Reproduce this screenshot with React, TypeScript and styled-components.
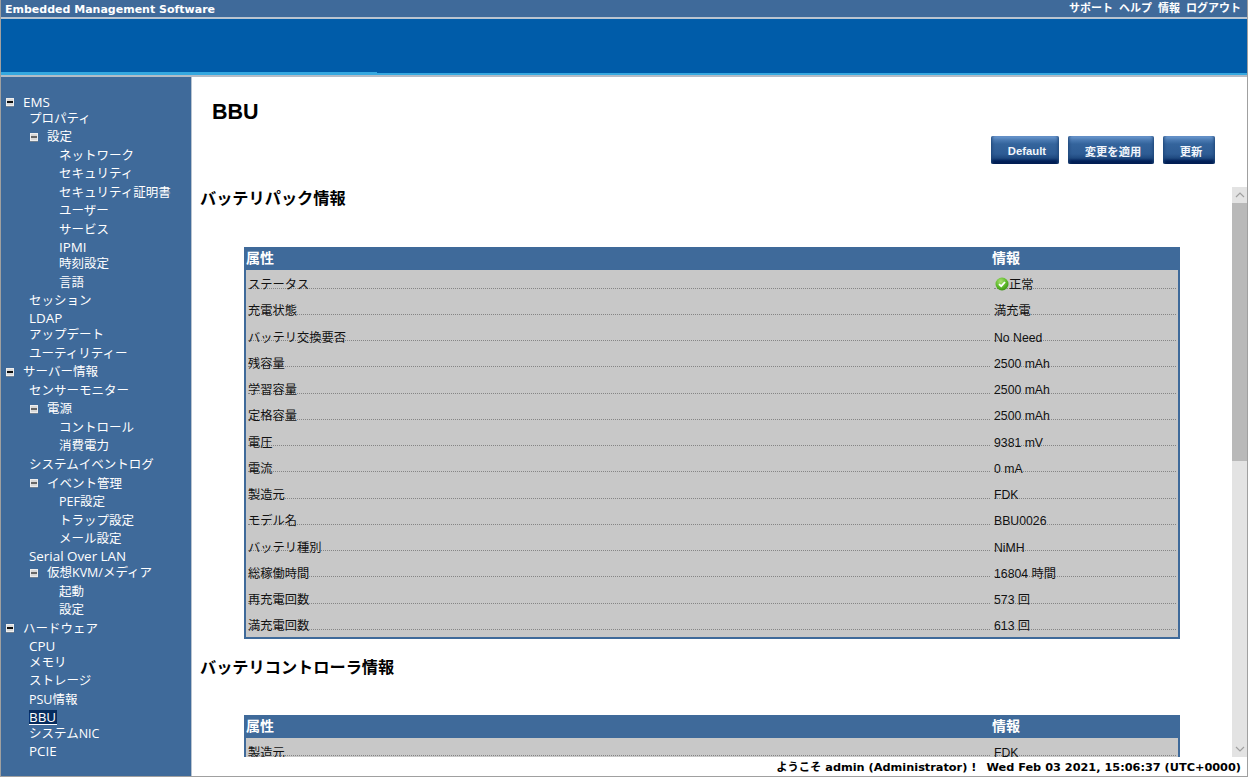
import React from 'react';
import styled, { createGlobalStyle } from 'styled-components';

const CJK = `"Noto Sans CJK JP", sans-serif`;

const Global = createGlobalStyle`
  html, body { margin: 0; padding: 0; background: #fff; overflow: hidden; }
  #root { width: 1248px; height: 782px; }
  * { box-sizing: border-box; }
`;

const Page = styled.div`
  width: 1248px;
  height: 777px;
  display: flex;
  flex-direction: column;
  border-left: 1px solid #a0a0a0;
  border-right: 1px solid #a0a0a0;
  border-bottom: 1px solid #a0a0a0;
  background: #fff;
  font-family: "Liberation Sans", ${CJK};
  overflow: hidden;
`;

const TopBar = styled.div`
  height: 19px;
  flex: none;
  background: #3f6a9a;
  border-bottom: 2px solid #b9c4d0;
  color: #fff;
  display: flex;
  justify-content: space-between;
  padding: 2px 6px 0 4px;
`;

const Brand = styled.div`
  font: bold 11px/15px "DejaVu Sans", ${CJK};
`;

const TopLinks = styled.div`
  display: flex;
  gap: 6px;
  margin-top: -1px;
  font: bold 11px/15px "DejaVu Sans", ${CJK};
`;

const Banner = styled.div`
  height: 56px;
  flex: none;
  background: #005ca9;
  display: flex;
  flex-direction: column;
  justify-content: flex-end;
`;

const Stripe = styled.div`
  height: 3px;
  display: flex;
  align-items: flex-end;
`;

const StripeStrong = styled.div`
  width: 376px;
  height: 3px;
  background: #35a8e0;
`;

const StripeWeak = styled.div`
  flex: 1;
  height: 2px;
  background: #35a8e0;
`;

const Rule = styled.div`
  height: 2px;
  flex: none;
  background: #b4bcc6;
`;

const Body = styled.div`
  flex: 1;
  min-height: 0;
  display: flex;
`;

const Sidebar = styled.nav`
  width: 191px;
  flex: none;
  background: #3f6a9a;
  border-right: 1px solid #b9c4d0;
  color: #fff;
  padding-top: 17.4px;
  font: 13px "DejaVu Sans", ${CJK};
`;

const TreeRow = styled.div<{ $level: number; $latin?: boolean; $fold?: boolean }>`
  height: ${p => (p.$latin ? 15.5 : 18.55)}px;
  display: flex;
  align-items: center;
  white-space: nowrap;
  padding-left: ${p =>
    p.$fold ? (p.$level === 0 ? 5 : 29) : p.$level === 1 ? 28 : 58}px;
  padding-bottom: ${p => (p.$latin ? 0 : 2)}px;
`;

const Fold = styled.span<{ $root?: boolean }>`
  width: 8px;
  height: 8px;
  flex: none;
  margin-right: 9px;
  background: #d8d8d8;
  border: 1px solid #eee;
  display: flex;
  align-items: center;
  justify-content: center;
  box-shadow: 0 1px 0 #6f7f90;
  &::after {
    content: '';
    width: 6px;
    height: 2px;
    background: ${p => (p.$root ? '#111' : '#666')};
  }
`;

const Label = styled.span<{ $active?: boolean; $latin?: boolean }>`
  font-family: "Open Sans", ${CJK};
  font-size: ${p => (p.$latin ? 13.4 : 12.5)}px;
  line-height: 15px;
  ${p =>
    p.$active &&
    `background: #062c5e; border-bottom: 1px solid #fff; line-height: 14px; padding: 0 1px 0 0;`}
`;

const Main = styled.main`
  flex: 1;
  min-width: 0;
  display: flex;
  flex-direction: column;
`;

const Head = styled.div`
  height: 110px;
  flex: none;
  display: flex;
  flex-direction: column;
`;

const PageTitle = styled.h1`
  margin: 0;
  padding: 22px 0 0 20px;
  font: bold 21.5px/26px "Liberation Sans", ${CJK};
  color: #000;
`;

const Actions = styled.div`
  margin-top: 11px;
  display: flex;
  justify-content: flex-end;
  gap: 9px;
  padding-right: 32px;
`;

const ActionButton = styled.button<{ $w: number }>`
  width: ${p => p.$w}px;
  height: 28px;
  border: 0;
  padding: 2px 0 0 4px;
  border-radius: 2px;
  color: #f2f6fb;
  font: bold 11.3px "Liberation Sans", ${CJK};
  background: linear-gradient(#6e9bd2 0, #4b7ab2 4px, #34649c 8px, #2e5c94 18px, #1f4a80 22px, #02215a 25px, #011c50 28px);
  box-shadow: inset 3px 0 3px -2px #1e4677, inset -3px 0 3px -2px #1e4677;
`;

const ScrollFrame = styled.div`
  flex: 1;
  min-height: 0;
  display: flex;
`;

const ScrollPane = styled.div`
  flex: 1;
  min-width: 0;
  overflow: hidden;
  padding-left: 8px;
`;

const SectionTitle = styled.h2<{ $gap: number }>`
  margin: 0;
  height: 24px;
  margin-top: ${p => p.$gap}px;
  font: bold 16.2px/22px "Liberation Sans", ${CJK};
  color: #000;
`;

const InfoTable = styled.div<{ $top: number }>`
  width: 936px;
  margin: ${p => p.$top}px 0 0 44px;
  border: solid #3f6a9a;
  border-width: 0 2px 2px 2px;
  background: #c8c8c8;
`;

const HeaderRow = styled.div`
  display: grid;
  grid-template-columns: 746px 1fr;
  height: 23px;
  margin: 0 -2px 1px;
  background: #3f6a9a;
  color: #fff;
  font: bold 14px/23px "Liberation Sans", ${CJK};
  padding-left: 2px;
`;

const DataRow = styled.div`
  display: grid;
  grid-template-columns: 742px 182px;
  column-gap: 4px;
  padding: 0 2px;
  height: 26.25px;
  &:last-child {
    height: 24.5px;
  }
`;

const Cell = styled.div`
  height: 17.5px;
  border-bottom: 1px dotted #858585;
  font: 12.25px/29px "Liberation Sans", ${CJK};
  color: #111;
  white-space: nowrap;
  display: flex;
  align-items: flex-start;
`;

const ScrollBar = styled.div`
  width: 15px;
  flex: none;
  background: #e3e3e3;
  display: flex;
  flex-direction: column;
`;

const ScrollArrow = styled.div`
  height: 16px;
  flex: none;
  display: flex;
  align-items: center;
  justify-content: center;
  color: #a0a0a0;
`;

const ScrollTrack = styled.div`
  flex: 1;
`;

const ScrollThumb = styled.div`
  height: 258px;
  background: #b9b9b9;
`;

const Footer = styled.div`
  height: 19px;
  flex: none;
  text-align: right;
  padding-right: 6px;
  font: bold 11.3px/21px "DejaVu Sans", ${CJK};
  color: #000;
  white-space: nowrap;
`;

const Sep = styled.span`
  display: inline-block;
  width: 10px;
`;

const IconSlot = styled.svg`
  margin: 6px 0 0 1px;
  flex: none;
`;

type Node = { t: string; l: number; latin?: boolean; fold?: boolean; active?: boolean };

const tree: Node[] = [
  { t: 'EMS', l: 0, fold: true, latin: true },
  { t: 'プロパティ', l: 1 },
  { t: '設定', l: 1, fold: true },
  { t: 'ネットワーク', l: 2 },
  { t: 'セキュリティ', l: 2 },
  { t: 'セキュリティ証明書', l: 2 },
  { t: 'ユーザー', l: 2 },
  { t: 'サービス', l: 2 },
  { t: 'IPMI', l: 2, latin: true },
  { t: '時刻設定', l: 2 },
  { t: '言語', l: 2 },
  { t: 'セッション', l: 1 },
  { t: 'LDAP', l: 1, latin: true },
  { t: 'アップデート', l: 1 },
  { t: 'ユーティリティー', l: 1 },
  { t: 'サーバー情報', l: 0, fold: true },
  { t: 'センサーモニター', l: 1 },
  { t: '電源', l: 1, fold: true },
  { t: 'コントロール', l: 2 },
  { t: '消費電力', l: 2 },
  { t: 'システムイベントログ', l: 1 },
  { t: 'イベント管理', l: 1, fold: true },
  { t: 'PEF設定', l: 2 },
  { t: 'トラップ設定', l: 2 },
  { t: 'メール設定', l: 2 },
  { t: 'Serial Over LAN', l: 1, latin: true },
  { t: '仮想KVM/メディア', l: 1, fold: true },
  { t: '起動', l: 2 },
  { t: '設定', l: 2 },
  { t: 'ハードウェア', l: 0, fold: true },
  { t: 'CPU', l: 1, latin: true },
  { t: 'メモリ', l: 1 },
  { t: 'ストレージ', l: 1 },
  { t: 'PSU情報', l: 1 },
  { t: 'BBU', l: 1, latin: true, active: true },
  { t: 'システムNIC', l: 1 },
  { t: 'PCIE', l: 1, latin: true },
];

const packRows: [string, string][] = [
  ['ステータス', '正常'],
  ['充電状態', '満充電'],
  ['バッテリ交換要否', 'No Need'],
  ['残容量', '2500 mAh'],
  ['学習容量', '2500 mAh'],
  ['定格容量', '2500 mAh'],
  ['電圧', '9381 mV'],
  ['電流', '0 mA'],
  ['製造元', 'FDK'],
  ['モデル名', 'BBU0026'],
  ['バッテリ種別', 'NiMH'],
  ['総稼働時間', '16804 時間'],
  ['再充電回数', '573 回'],
  ['満充電回数', '613 回'],
];

const StatusIcon = () => (
  <IconSlot width="14" height="14" viewBox="0 0 14 14">
    <defs>
      <radialGradient id="ok" cx="40%" cy="30%" r="75%">
        <stop offset="0" stopColor="#a8e070" />
        <stop offset="0.6" stopColor="#5cb82a" />
        <stop offset="1" stopColor="#3a8f14" />
      </radialGradient>
    </defs>
    <circle cx="7" cy="7" r="6.5" fill="url(#ok)" />
    <path d="M4 7.2 L6.2 9.2 L10 5" fill="none" stroke="#fff" strokeWidth="1.8" />
  </IconSlot>
);

const Chevron = ({ up }: { up?: boolean }) => (
  <svg width="10" height="6" viewBox="0 0 10 6">
    <path d={up ? 'M1 5 L5 1 L9 5' : 'M1 1 L5 5 L9 1'} fill="none" stroke="currentColor" strokeWidth="1.2" />
  </svg>
);

export default function App() {
  return (
    <>
      <Global />
      <Page>
        <TopBar>
          <Brand>Embedded Management Software</Brand>
          <TopLinks>
            <span>サポート</span>
            <span>ヘルプ</span>
            <span>情報</span>
            <span>ログアウト</span>
          </TopLinks>
        </TopBar>
        <Banner>
          <Stripe>
            <StripeStrong />
            <StripeWeak />
          </Stripe>
        </Banner>
        <Rule />
        <Body>
          <Sidebar>
            {tree.map((n, i) => (
              <TreeRow key={i} $level={n.l} $latin={n.latin} $fold={n.fold}>
                {n.fold && <Fold $root={n.l === 0} />}
                <Label $active={n.active} $latin={n.latin}>{n.t}</Label>
              </TreeRow>
            ))}
          </Sidebar>
          <Main>
            <Head>
              <PageTitle>BBU</PageTitle>
              <Actions>
                <ActionButton $w={68}>Default</ActionButton>
                <ActionButton $w={86}>変更を適用</ActionButton>
                <ActionButton $w={52}>更新</ActionButton>
              </Actions>
            </Head>
            <ScrollFrame>
              <ScrollPane>
                <SectionTitle $gap={0}>バッテリパック情報</SectionTitle>
                <InfoTable $top={36}>
                  <HeaderRow>
                    <span>属性</span>
                    <span>情報</span>
                  </HeaderRow>
                  {packRows.map(([k, v]) => (
                    <DataRow key={k}>
                      <Cell>{k}</Cell>
                      <Cell>
                        {v === '正常' && <StatusIcon />}
                        {v}
                      </Cell>
                    </DataRow>
                  ))}
                </InfoTable>
                <SectionTitle $gap={17}>バッテリコントローラ情報</SectionTitle>
                <InfoTable $top={35}>
                  <HeaderRow>
                    <span>属性</span>
                    <span>情報</span>
                  </HeaderRow>
                  <DataRow>
                    <Cell>製造元</Cell>
                    <Cell>FDK</Cell>
                  </DataRow>
                </InfoTable>
              </ScrollPane>
              <ScrollBar>
                <ScrollArrow>
                  <Chevron up />
                </ScrollArrow>
                <ScrollThumb />
                <ScrollTrack />
                <ScrollArrow>
                  <Chevron />
                </ScrollArrow>
              </ScrollBar>
            </ScrollFrame>
            <Footer>
              ようこそ admin (Administrator) !<Sep />Wed Feb 03 2021, 15:06:37 (UTC+0000)
            </Footer>
          </Main>
        </Body>
      </Page>
    </>
  );
}
